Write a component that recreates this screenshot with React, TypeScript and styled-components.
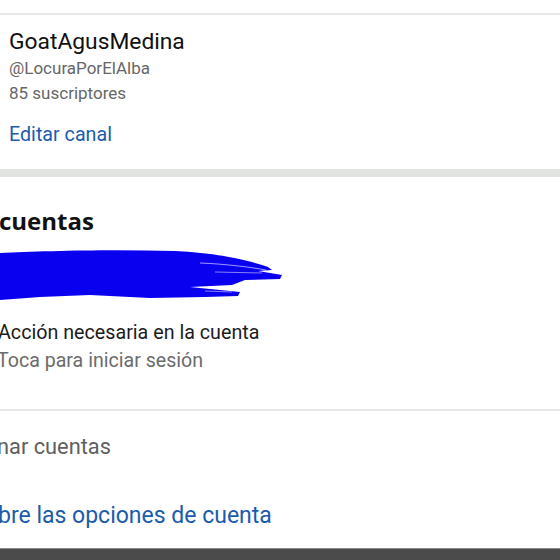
import styled, { createGlobalStyle } from "styled-components";

const Global = createGlobalStyle`
  html, body {
    margin: 0;
    padding: 0;
    background: #fff;
  }
  body {
    width: 560px;
    height: 560px;
    overflow: hidden;
    font-family: Roboto, "Liberation Sans", sans-serif;
  }
`;

const Page = styled.div`
  width: 560px;
  height: 560px;
  display: flex;
  flex-direction: column;
  overflow: hidden;
  background: #fff;
`;

const TopGap = styled.div`
  height: 13px;
  border-bottom: 2px solid #e8e8e8;
`;

const ChannelCard = styled.section`
  padding: 12px 9px 0;
  height: 154px;
  box-sizing: border-box;
`;

const ChannelName = styled.div`
  font-size: 22.8px;
  color: #111;
  line-height: 29px;
`;

const Meta = styled.div`
  font-size: 17px;
  color: #666;
  line-height: 25px;
`;

const LinkText = styled.div<{ $size?: number; $indent?: number; $top?: number }>`
  font-size: ${(p) => p.$size ?? 19.7}px;
  color: #1a5cab;
  line-height: 26px;
  margin-top: ${(p) => p.$top ?? 0}px;
  text-indent: ${(p) => p.$indent ?? 0}px;
  white-space: nowrap;
`;

const Band = styled.div`
  height: 8px;
  background: #e1e3e1;
`;

const AccountsSection = styled.section`
  display: flex;
  flex-direction: column;
  padding-top: 29px;
  height: 234px;
  box-sizing: border-box;
  border-bottom: 2px solid #e6e6e6;
`;

const Heading = styled.h2`
  margin: 0;
  font-family: "Open Sans", "DejaVu Sans", sans-serif;
  font-weight: 700;
  font-size: 24px;
  line-height: 30px;
  color: #111;
  text-indent: -1px;
  white-space: nowrap;
`;

const Scribble = styled.svg`
  display: block;
  margin-top: 13px;
  width: 290px;
  height: 56px;
  flex-shrink: 0;
`;

const AccountTitle = styled.div`
  margin-top: 14px;
  font-size: 19.7px;
  line-height: 28px;
  color: #1c1c1c;
  text-indent: -2px;
  white-space: nowrap;
`;

const AccountSub = styled.div`
  font-size: 19.6px;
  line-height: 28px;
  color: #6b6b6b;
  text-indent: -3px;
  white-space: nowrap;
`;

const OptionRow = styled.div`
  padding-top: 22px;
`;

const OptionText = styled.div`
  font-size: 21.8px;
  line-height: 28px;
  color: #606060;
  text-indent: -3px;
  white-space: nowrap;
`;

const HelpRow = styled.div`
  padding-top: 41px;
`;

const NavBar = styled.div`
  margin-top: auto;
  height: 11px;
  background: #4b4b4b;
  border-top: 1px solid #8a8a8a;
`;

const BlueScribble = () => (
  <Scribble viewBox="0 0 290 56">
    <path
      d="M0 4 C40 2 110 0 175 2 C215 4 245 10 268 18 L272 21 L258 22 L282 26 L280 30 L245 31 L232 36 L190 38 L240 43 L238 47 L205 48 L150 49 L90 46 L40 48 L0 51 Z"
      fill="#0a00f0"
    />
    <path d="M200 14 C225 15 250 18 266 21" stroke="#fff" strokeWidth="1" fill="none" opacity="0.6" />
    <path d="M215 23 L262 24" stroke="#fff" strokeWidth="1" fill="none" opacity="0.5" />
    <path d="M205 42 L232 43" stroke="#fff" strokeWidth="1" fill="none" opacity="0.5" />
  </Scribble>
);

export default function App() {
  return (
    <Page>
      <Global />
      <TopGap />
      <ChannelCard>
        <ChannelName>GoatAgusMedina</ChannelName>
        <Meta>@LocuraPorElAlba</Meta>
        <Meta>85 suscriptores</Meta>
        <LinkText $top={16}>Editar canal</LinkText>
      </ChannelCard>
      <Band />
      <AccountsSection>
        <Heading>cuentas</Heading>
        <BlueScribble />
        <AccountTitle>Acción necesaria en la cuenta</AccountTitle>
        <AccountSub>Toca para iniciar sesión</AccountSub>
      </AccountsSection>
      <OptionRow>
        <OptionText>nar cuentas</OptionText>
      </OptionRow>
      <HelpRow>
        <LinkText $size={23} $indent={-2} style={{ lineHeight: "28px" }}>
          bre las opciones de cuenta
        </LinkText>
      </HelpRow>
      <NavBar />
    </Page>
  );
}
